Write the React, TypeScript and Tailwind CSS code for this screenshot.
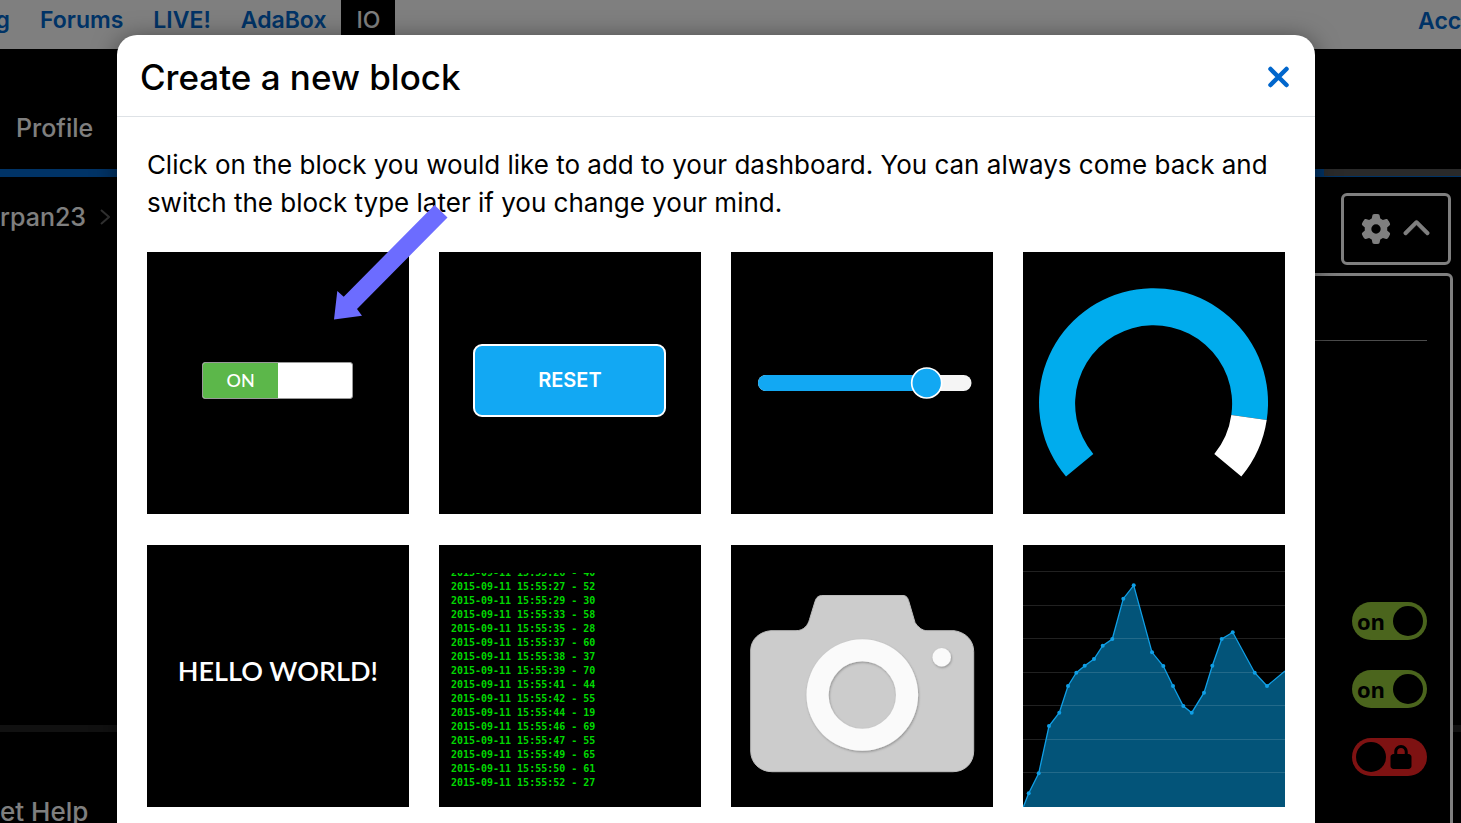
import React, { useState } from 'react';
import { FaChevronUp, FaGear, FaLock } from 'react-icons/fa6';

const navLinks = ['Forums', 'LIVE!', 'AdaBox'];

const logLines = [
  '2015-09-11 15:55:26 - 40',
  '2015-09-11 15:55:27 - 52',
  '2015-09-11 15:55:29 - 30',
  '2015-09-11 15:55:33 - 58',
  '2015-09-11 15:55:35 - 28',
  '2015-09-11 15:55:37 - 60',
  '2015-09-11 15:55:38 - 37',
  '2015-09-11 15:55:39 - 70',
  '2015-09-11 15:55:41 - 44',
  '2015-09-11 15:55:42 - 55',
  '2015-09-11 15:55:44 - 19',
  '2015-09-11 15:55:46 - 69',
  '2015-09-11 15:55:47 - 55',
  '2015-09-11 15:55:49 - 65',
  '2015-09-11 15:55:50 - 61',
  '2015-09-11 15:55:52 - 27',
];

const chartPoints: [number, number][] = [
  [0.3, 262], [5.7, 248.3], [15.7, 228.3], [26, 181], [36.3, 167.7], [45, 141], [53.3, 127.7],
  [61.7, 120.7], [71, 114], [79.7, 100.7], [89.3, 94], [100.3, 53.7], [110.7, 40.3], [129, 107.3],
  [140.3, 121], [150, 141], [160.3, 161], [168.7, 167.7], [181, 147.7], [189.3, 120.7],
  [198.7, 94], [209.7, 87.3], [231.7, 127.7], [244, 141], [262, 126],
];

const gridLines = [26.5, 60.5, 93.5, 127.5, 160.5, 194.5, 227.5];

function TogglePreview() {
  return (
    <span className="flex h-full items-center justify-center pb-1.5">
      <span className="flex h-[37px] w-[151px] overflow-hidden rounded-[3px] border border-[#999] bg-white">
        <span className="flex w-1/2 items-center justify-center bg-[#5cb74a] font-['Lato'] text-lg font-medium text-white">
          ON
        </span>
      </span>
    </span>
  );
}

function MomentaryPreview() {
  return (
    <span className="flex h-full items-center justify-center pb-1.5">
      <span className="flex h-[73px] w-[193px] items-center justify-center rounded-[9px] border-2 border-white bg-[#12a8f3] font-['Inter'] text-xl font-semibold text-white">
        RESET
      </span>
    </span>
  );
}

function SliderPreview() {
  return (
    <svg viewBox="0 0 262 262" className="size-full" aria-hidden="true">
      <rect x="27" y="123" width="213.500" height="16" rx="8" fill="#f5f5f5" />
      <path d="M35 123H196V139H35A8 8 0 0 1 35 123Z" fill="#12a8f3" />
      <circle cx="195.700" cy="131" r="15" fill="#12a8f3" stroke="#fff" strokeWidth="1.700" />
    </svg>
  );
}

function GaugePreview() {
  return (
    <svg viewBox="0 0 262 262" className="size-full" aria-hidden="true">
      <path
        d="M43 224.500A114.500 114.500 0 1 1 243.700 168L208.300 163A78.500 78.500 0 1 0 70.300 202Z"
        fill="#00aced"
      />
      <path
        d="M243.700 168A114.500 114.500 0 0 1 218.300 224.500L191.300 202A78.500 78.500 0 0 0 208.300 163Z"
        fill="#fff"
      />
    </svg>
  );
}

function TextPreview() {
  return (
    <span className="flex h-full items-center justify-center pb-2.5 font-['Lato'] text-[27px] font-semibold text-white">
      HELLO WORLD!
    </span>
  );
}

function StreamPreview() {
  return (
    <span className="flex h-full flex-col px-3 pt-7 pb-[17px]">
      <span className="flex min-h-0 flex-1 flex-col justify-end overflow-hidden text-left font-['DejaVu_Sans_Mono',monospace] text-[10px] leading-[14px] font-bold text-[#00d800]">
        {logLines.map((line) => (
          <span key={line} className="whitespace-nowrap">
            {line}
          </span>
        ))}
      </span>
    </span>
  );
}

function CameraPreview() {
  return (
    <svg viewBox="0 0 262 262" className="size-full" aria-hidden="true">
      <defs>
        <filter id="lens-shadow" x="-20%" y="-20%" width="140%" height="140%">
          <feDropShadow dx="0.700" dy="1.200" stdDeviation="1" floodColor="#000" floodOpacity="0.300" />
        </filter>
      </defs>
      <path
        d="M40 85.700H65C73 85.700 77 80 78.500 74.500L84 56.500C85.500 52 87.500 50.500 92 50.500H172C175.500 50.500 177 53 178 57L184 77.500C187 82 191 85.700 196 85.700H223C234 87 242.700 95 242.700 106.500V206C242.700 218 234 226.700 222 226.700H41C29 226.700 19.700 218 19.700 206V105C20 94 29 86.500 40 85.700Z"
        fill="#ccc"
        stroke="#bdbdbd"
        strokeWidth="1"
      />
      <path
        filter="url(#lens-shadow)"
        fillRule="evenodd"
        d="M75.500 150A55.800 55.800 0 1 1 187.100 150A55.800 55.800 0 1 1 75.500 150ZM97.600 150A33.700 33.700 0 1 0 165 150A33.700 33.700 0 1 0 97.600 150Z"
        fill="#fafafa"
      />
      <circle cx="210.700" cy="112.300" r="9.200" fill="#fafafa" filter="url(#lens-shadow)" />
    </svg>
  );
}

function ChartPreview() {
  const line = chartPoints.map(([x, y]) => `${x},${y}`).join(' ');
  return (
    <svg viewBox="0 0 262 262" className="size-full" aria-hidden="true">
      <polygon points={`${line} 262,262`} fill="#035479" />
      {gridLines.map((y) => (
        <path key={y} d={`M0 ${y}H262`} stroke="#fff" strokeOpacity="0.130" />
      ))}
      <polyline points={line} fill="none" stroke="#109fe6" strokeWidth="1.300" />
      {chartPoints.slice(1, -1).map(([x, y]) => (
        <circle key={x} cx={x} cy={y} r="2" fill="#109fe6" />
      ))}
    </svg>
  );
}

const blocks = [
  { name: 'Toggle', Preview: TogglePreview },
  { name: 'Momentary Button', Preview: MomentaryPreview },
  { name: 'Slider', Preview: SliderPreview },
  { name: 'Gauge', Preview: GaugePreview },
  { name: 'Text', Preview: TextPreview },
  { name: 'Stream', Preview: StreamPreview },
  { name: 'Image', Preview: CameraPreview },
  { name: 'Line Chart', Preview: ChartPreview },
];

function Switch({ name }: { name: string }) {
  const [on, setOn] = useState(true);
  return (
    <label className="flex h-[38px] w-[75px] items-center justify-between rounded-full bg-[#96ca3a] pr-1 pl-[5px] font-['Open_Sans',sans-serif] text-[22px] font-bold text-black">
      <input
        type="checkbox"
        aria-label={name}
        checked={on}
        onChange={() => setOn(!on)}
        className="sr-only"
      />
      <span>on</span>
      <span className="size-[30px] rounded-full bg-black" />
    </label>
  );
}

function LockSwitch() {
  const [locked, setLocked] = useState(false);
  return (
    <label className="flex h-[38px] w-[75px] items-center gap-[3px] rounded-full bg-[#fc2424] pl-1 text-black">
      <input
        type="checkbox"
        aria-label="Block lock"
        checked={locked}
        onChange={() => setLocked(!locked)}
        className="sr-only"
      />
      <span className="size-[30px] rounded-full bg-black" />
      <FaLock className="size-6" />
    </label>
  );
}

function SettingsMenu() {
  return (
    <div className="relative">
      <button
        type="button"
        aria-label="Dashboard settings"
        className="flex h-[72px] w-[110px] items-center justify-center gap-[11px] rounded-md border-3 border-white text-white"
      >
        <FaGear className="size-[30px]" />
        <FaChevronUp className="size-[29px]" stroke="currentColor" strokeWidth="12" />
      </button>
      <div className="absolute top-full -right-0.5 z-10 mt-2 flex h-[700px] w-96 flex-col items-end rounded-md border-3 border-white bg-black pr-[23px]">
        <div className="h-16 w-full shrink-0" />
        <hr className="w-full border-[#999]" />
        <div className="mt-[261px] flex flex-col gap-[30px]">
          <Switch name="Edit layout" />
          <Switch name="Dark mode" />
          <LockSwitch />
        </div>
      </div>
    </div>
  );
}

export default function App() {
  return (
    <div className="relative flex h-screen flex-col overflow-hidden bg-black font-['Inter',sans-serif]">
      <header className="flex h-[49px] shrink-0 items-start justify-between overflow-hidden bg-white text-[23px] leading-10 font-semibold text-[#0066cc]">
        <nav className="flex">
          <a href="#blog" className="flex w-[25px] justify-end pr-[15px]">
            g
          </a>
          {navLinks.map((label) => (
            <a key={label} href={`#${label}`} className="px-[15px]">
              {label}
            </a>
          ))}
          <a href="#io" className="h-[49px] bg-black px-[15px] font-medium text-white">
            IO
          </a>
        </nav>
        <a href="#account" className="w-[43px] leading-[42px]">
          Account
        </a>
      </header>

      <nav className="flex h-[120px] shrink-0 items-end px-4 pb-5 text-[25px] leading-[42px] font-medium text-white">
        <a href="#profile">Profile</a>
      </nav>
      <div className="flex h-2 shrink-0 items-start justify-end bg-[#0066cc]">
        <div className="h-[7px] w-[9.4%] bg-[#555]" />
      </div>

      <main className="flex min-h-0 flex-1 items-start justify-between pt-4 pr-2.5">
        <nav className="flex items-center gap-3.5 text-[25px] leading-[48px] font-medium text-white">
          <a href="#user">rpan23</a>
          <svg viewBox="0 0 10 16" className="h-4 w-2.5" aria-hidden="true">
            <path d="M1 1L9 8L1 15" fill="none" stroke="#666" strokeWidth="2" />
          </svg>
        </nav>
        <SettingsMenu />
      </main>

      <footer className="h-[98px] shrink-0 border-t-7 border-[#222] pt-[59px] text-[26px] leading-[42px] font-medium text-white">
        <a href="#help">et Help</a>
      </footer>

      <div className="absolute inset-0 z-20 overflow-hidden bg-black/50 pt-[35px] pr-[10%] pl-[8%]">
        <section
          role="dialog"
          aria-modal="true"
          aria-labelledby="dialog-title"
          className="min-h-screen rounded-[20px] bg-white text-black shadow-[0_4px_24px_rgba(0,0,0,0.5)]"
        >
          <div className="flex h-[82px] items-center justify-between border-b border-[#dee2e6] pt-0.5 pr-[25px] pl-[23px]">
            <h1 id="dialog-title" className="text-[35px] leading-10 font-medium">
              Create a new block
            </h1>
            <button type="button" aria-label="Close">
              <svg viewBox="0 0 23 22" className="h-[22px] w-[23px]" aria-hidden="true">
                <path d="M3.500 3L19.500 19M19.500 3L3.500 19" stroke="#0066cc" strokeWidth="4.500" strokeLinecap="round" />
              </svg>
            </button>
          </div>
          <div className="px-[30px] pt-[29px]">
            <p className="text-[26px] leading-[38px]">
              Click on the block you would like to add to your dashboard. You can always come back and
              switch the block type later if you change your mind.
            </p>
            <div className="mt-[30px] grid grid-cols-4 gap-x-[30px] gap-y-[31px]">
              {blocks.map(({ name, Preview }, index) => (
                <button key={name} type="button" aria-label={name} className="relative aspect-square bg-black">
                  <Preview />
                  {index === 0 && (
                    <svg
                      viewBox="0 0 114 116"
                      className="pointer-events-none absolute -top-12 left-[187px] z-10 h-[116px] w-[114px]"
                      aria-hidden="true"
                    >
                      <path d="M0 115.500L3.300 87L9.700 92.700L100.500 1L113.500 13.500L23 105L28 111.700Z" fill="#6c6cff" />
                    </svg>
                  )}
                </button>
              ))}
            </div>
          </div>
        </section>
      </div>
    </div>
  );
}
